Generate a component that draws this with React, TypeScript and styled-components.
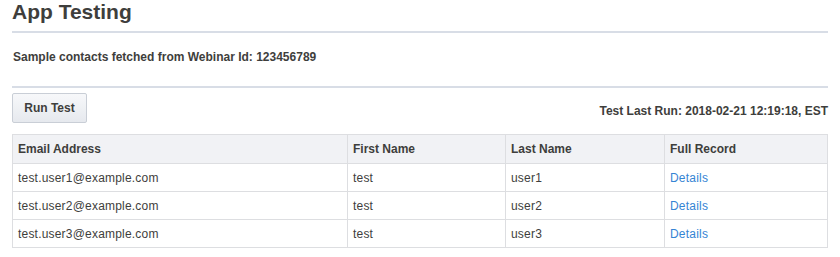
import styled, { createGlobalStyle } from 'styled-components';

const GlobalStyle = createGlobalStyle`
  body {
    margin: 0;
    background: #fff;
    font-family: 'Liberation Sans', Arial, sans-serif;
    color: #3e3e3c;
  }
`;

const contacts = [
  { email: 'test.user1@example.com', first: 'test', last: 'user1' },
  { email: 'test.user2@example.com', first: 'test', last: 'user2' },
  { email: 'test.user3@example.com', first: 'test', last: 'user3' },
];

const Page = styled.div`
  padding: 0 12px;
`;

const Title = styled.h1`
  margin: 0;
  font-size: 21px;
  line-height: 24px;
  font-weight: 700;
  padding-bottom: 7px;
  border-bottom: 2px solid #d8dde6;
`;

const Section = styled.div`
  padding: 17px 0 22px 1px;
  border-bottom: 2px solid #d8dde6;
  font-size: 12px;
  line-height: 14px;
  font-weight: 700;
`;

const Toolbar = styled.div`
  display: flex;
  justify-content: space-between;
  align-items: center;
  margin-top: 5px;
`;

const Button = styled.button`
  width: 75px;
  height: 30px;
  padding: 0;
  font-family: 'Liberation Sans', Arial, sans-serif;
  font-size: 12px;
  font-weight: 700;
  color: #3e3e3c;
  border: 1px solid #c9ced6;
  border-radius: 2px;
  background: linear-gradient(#f7f8fa, #e6e9ee);
  cursor: pointer;
`;

const LastRun = styled.div`
  font-size: 12px;
  font-weight: 700;
  line-height: 14px;
  margin-top: 5px;
`;

const Table = styled.table`
  width: 100%;
  margin-top: 11px;
  border-collapse: collapse;
  table-layout: fixed;
  font-size: 12px;
`;

const HeadRow = styled.tr`
  height: 29px;
`;

const BodyRow = styled.tr`
  height: 28px;
`;

const Th = styled.th`
  padding: 0 5px;
  text-align: left;
  font-weight: 700;
  background: #f1f2f5;
  border: 1px solid #dddee1;
`;

const Td = styled.td`
  padding: 0 5px;
  letter-spacing: 0.2px;
  border: 1px solid #dddee1;
`;

const DetailsLink = styled.a`
  color: #3584d4;
  text-decoration: none;
`;

const App = () => {
  return (
    <Page>
      <GlobalStyle />
      <Title>App Testing</Title>
      <Section>Sample contacts fetched from Webinar Id: 123456789</Section>
      <Toolbar>
        <Button>Run Test</Button>
        <LastRun>Test Last Run: 2018-02-21 12:19:18, EST</LastRun>
      </Toolbar>
      <Table>
        <colgroup>
          <col style={{ width: '335px' }} />
          <col style={{ width: '158px' }} />
          <col style={{ width: '159px' }} />
          <col />
        </colgroup>
        <thead>
          <HeadRow>
            <Th>Email Address</Th>
            <Th>First Name</Th>
            <Th>Last Name</Th>
            <Th>Full Record</Th>
          </HeadRow>
        </thead>
        <tbody>
          {contacts.map((c) => (
            <BodyRow key={c.email}>
              <Td>{c.email}</Td>
              <Td>{c.first}</Td>
              <Td>{c.last}</Td>
              <Td>
                <DetailsLink href='#'>Details</DetailsLink>
              </Td>
            </BodyRow>
          ))}
        </tbody>
      </Table>
    </Page>
  );
};

export default App;
